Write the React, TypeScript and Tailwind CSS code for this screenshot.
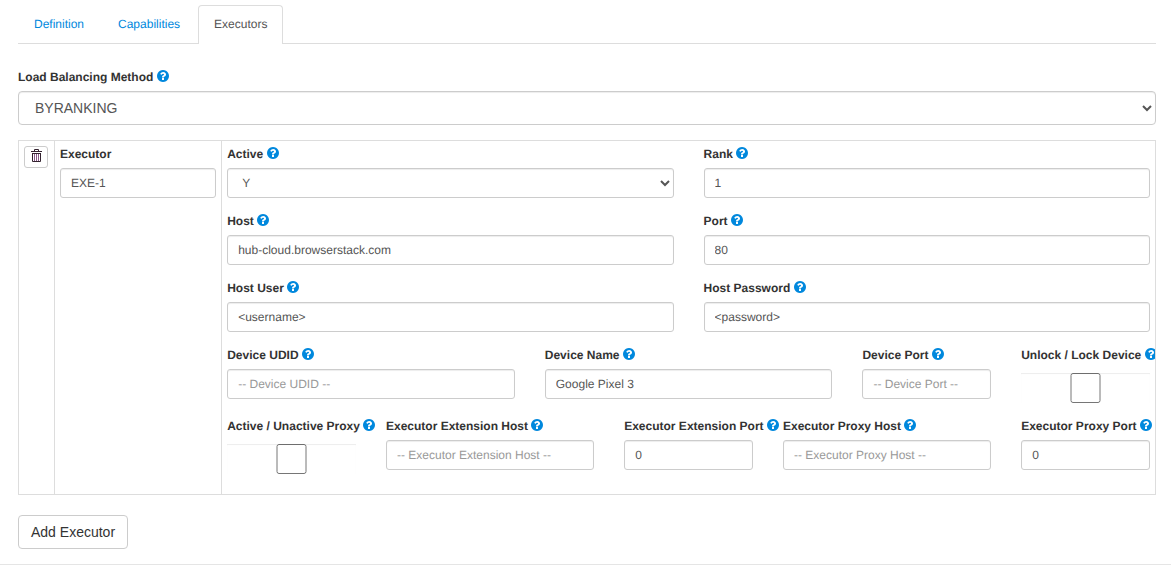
import React, { useState } from "react";

function HelpIcon() {
  return (
    <svg viewBox="128 128 1536 1536" className="ml-[3.3px] h-3 w-3 shrink-0 fill-[#0088dd]" aria-hidden="true">
      <path d="M1024 1376v-192q0-14-9-23t-23-9h-192q-14 0-23 9t-9 23v192q0 14 9 23t23 9h192q14 0 23-9t9-23zm256-672q0-88-55.5-163t-138.5-116-170-41q-243 0-371 213-15 24 8 42l132 100q7 6 19 6 16 0 25-12 53-68 86-92 34-24 86-24 48 0 85.5 26t37.5 59q0 38-20 61t-68 45q-63 28-115.5 86.5t-52.5 125.5v36q0 14 9 23t23 9h192q14 0 23-9t9-23q0-19 21.5-49.5t54.5-49.5q32-18 49-28.5t46-35 44.5-48 28-60.5 12.5-81zm384 192q0 209-103 385.5t-279.5 279.5-385.5 103-385.5-103-279.5-279.5-103-385.5 103-385.5 279.5-279.5 385.5-103 385.5 103 279.5 279.5 103 385.5z" />
    </svg>
  );
}

function TrashIcon() {
  return (
    <svg viewBox="0 0 11 13" className="h-[13px] w-[11px]" fill="none" aria-hidden="true">
      <path stroke="#8a5a88" d="M3.5 5v7M5.5 5v7M7.5 5v7" />
      <path stroke="#33222f" d="M3.5 2V.5h4V2M0 2.5h11M1 4.5h9M1.5 4v8.5h8V4" />
    </svg>
  );
}

const control =
  "block h-[30px] w-full rounded-[3px] border border-[#cccccc] bg-white px-[10px] py-[5px] text-xs leading-[18px] text-[#555555] [text-rendering:geometricPrecision] shadow-[inset_0_1px_1px_rgba(0,0,0,0.075)] outline-none placeholder:text-[#999999]";

function FieldLabel({ text, help = true }: { text: string; help?: boolean }) {
  return (
    <div className="mb-[9px] flex h-[13px] items-center whitespace-nowrap text-xs font-bold text-[#333333] [text-rendering:geometricPrecision]">
      <span className="pt-[2px] leading-[14px]">{text}</span>
      {help && <HelpIcon />}
    </div>
  );
}

interface FieldProps {
  label: string;
  span: string;
  value?: string;
  placeholder?: string;
  kind?: "text" | "select" | "checkbox";
}

function Field({ label, span, value = "", placeholder, kind = "text" }: FieldProps) {
  return (
    <div className={`${span} min-w-0 px-[15px]`}>
      <FieldLabel text={label} />
      {kind === "text" && <input aria-label={label} className={control} defaultValue={value} placeholder={placeholder} />}
      {kind === "select" && (
        <select aria-label={label} className={control} defaultValue={value}>
          <option>Y</option>
          <option>N</option>
        </select>
      )}
      {kind === "checkbox" && (
        <input
          type="checkbox"
          aria-label={label}
          className="mt-[13px] block h-[30px] w-full shadow-[inset_0_1px_1px_rgba(0,0,0,0.075)]"
        />
      )}
    </div>
  );
}

const tabs = ["Definition", "Capabilities", "Executors"];

export default function App() {
  const [active, setActive] = useState("Executors");
  return (
    <div className="h-[565px] overflow-hidden bg-white font-['Liberation_Sans',Arial,sans-serif]">
      <div className="h-full border-b border-[#e5e5e5] pl-[18px] pr-[15px] pt-[5px]">
        <nav className="flex h-[39px] border-b border-[#dddddd] text-xs">
          {tabs.map((tab) => (
            <button
              key={tab}
              onClick={() => setActive(tab)}
              className={
                tab === active
                  ? "mr-[2px] h-[39px] rounded-t-[4px] border border-b-0 border-[#dddddd] bg-white px-[15px] pb-[2px] text-[#555555] [text-rendering:geometricPrecision]"
                  : "mr-[2px] h-[39px] border border-b-0 border-transparent px-[15px] pb-[2px] text-[#0088dd] [text-rendering:geometricPrecision]"
              }
            >
              {tab}
            </button>
          ))}
        </nav>

        <div className="mt-[25px]">
          <FieldLabel text="Load Balancing Method" />
          <select
            aria-label="Load Balancing Method"
            className="block h-[34px] w-full rounded-[4px] border border-[#cccccc] bg-white px-3 py-[6px] text-sm leading-5 text-[#555555] shadow-[inset_0_1px_1px_rgba(0,0,0,0.075)] outline-none"
          >
            <option>BYRANKING</option>
            <option>ROUNDROBIN</option>
          </select>
        </div>

        <section className="mt-[15px] flex h-[355px] border border-[#dddddd]">
          <div className="w-9 border-r border-[#dddddd] p-[5px]">
            <button aria-label="Delete" className="flex h-[22px] w-6 items-start rounded-[3px] border border-[#cccccc] pl-[6px] pt-[2px]">
              <TrashIcon />
            </button>
          </div>
          <div className="w-[167px] border-r border-[#dddddd] p-[5px]">
            <FieldLabel text="Executor" help={false} />
            <input aria-label="Executor" className={control} defaultValue="EXE-1" />
          </div>
          <div className="min-w-0 flex-1 overflow-hidden py-[5px] pl-[5.2px] pr-[5px]">
            <div className="-mx-[15px] grid grid-cols-12">
              <Field span="col-span-6 h-[67px]" label="Active" kind="select" value="Y" />
              <Field span="col-span-6 h-[67px]" label="Rank" value="1" />
              <Field span="col-span-6 h-[67px]" label="Host" value="hub-cloud.browserstack.com" />
              <Field span="col-span-6 h-[67px]" label="Port" value="80" />
              <Field span="col-span-6 h-[67px]" label="Host User" value="<username>" />
              <Field span="col-span-6 h-[67px]" label="Host Password" value="<password>" />
              <Field span="col-span-4 h-[71px]" label="Device UDID" placeholder="-- Device UDID --" />
              <Field span="col-span-4 h-[71px]" label="Device Name" value="Google Pixel 3" />
              <Field span="col-span-2 h-[71px]" label="Device Port" placeholder="-- Device Port --" />
              <Field span="col-span-2 h-[71px]" label="Unlock / Lock Device" kind="checkbox" />
              <Field span="col-span-2" label="Active / Unactive Proxy" kind="checkbox" />
              <Field span="col-span-3" label="Executor Extension Host" placeholder="-- Executor Extension Host --" />
              <Field span="col-span-2" label="Executor Extension Port" value="0" />
              <Field span="col-span-3" label="Executor Proxy Host" placeholder="-- Executor Proxy Host --" />
              <Field span="col-span-2" label="Executor Proxy Port" value="0" />
            </div>
          </div>
        </section>

        <button className="mt-5 h-[34px] rounded-[4px] border border-[#cccccc] bg-white px-3 text-sm leading-5 text-[#333333]">
          Add Executor
        </button>
      </div>
    </div>
  );
}
